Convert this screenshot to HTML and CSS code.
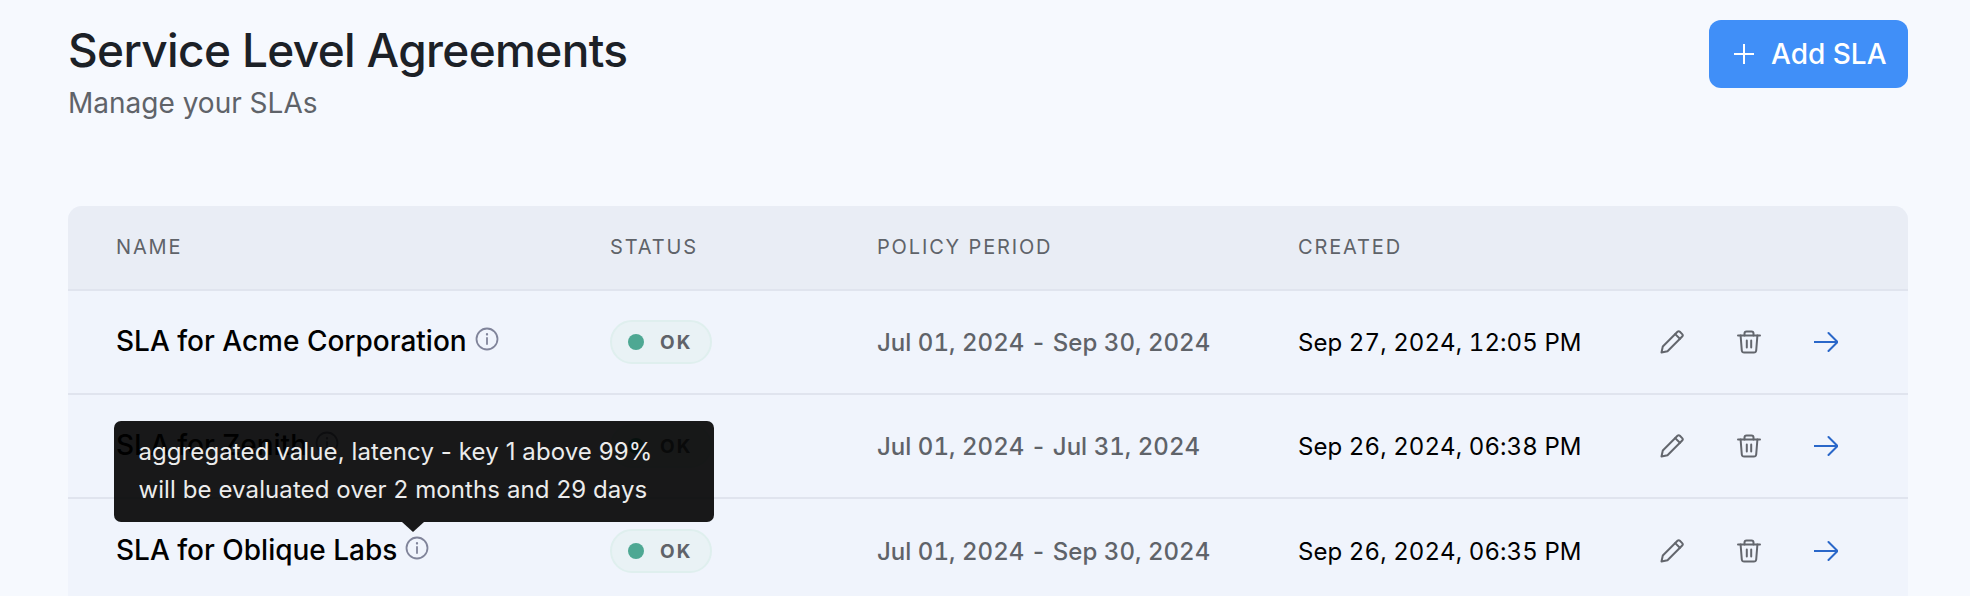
FILE: index.html
```html
<!DOCTYPE html>
<html lang="en">
<head>
<meta charset="utf-8">
<title>Service Level Agreements</title>
<link rel="stylesheet" href="styles.css">
</head>
<body>
<main class="page">
  <header class="page-head">
    <div class="titles">
      <h1 class="title">Service Level Agreements</h1>
      <p class="subtitle">Manage your SLAs</p>
    </div>
    <button class="add-btn" type="button">
      <svg class="add-icon" viewBox="0 0 22 22" aria-hidden="true"><path d="M11 1v20M1 11h20"/></svg>
      <span>Add SLA</span>
    </button>
  </header>

  <section class="table">
    <div class="row head-row">
      <div class="cell-name">NAME</div>
      <div>STATUS</div>
      <div>POLICY PERIOD</div>
      <div>CREATED</div>
      <div></div>
    </div>

    <div class="row">
      <div class="cell-name name"><span>SLA for Acme Corporation</span>
        <span class="info-wrap"><svg class="info" viewBox="0 0 24 24" aria-hidden="true"><circle cx="12" cy="12" r="10.5"/><path d="M12 11v6"/><path class="dot" d="M12 7v.6"/></svg></span>
      </div>
      <div><span class="badge"><i class="badge-dot"></i>OK</span></div>
      <div class="period">Jul 01, 2024 - Sep 30, 2024</div>
      <div class="created">Sep 27, 2024, 12:05 PM</div>
      <div class="actions">
        <svg class="act" viewBox="0 0 24 24" aria-hidden="true"><path d="M1.5 22.5l1.3-6L17.5 1.8a1.7 1.7 0 0 1 2.4 0l2.3 2.3a1.7 1.7 0 0 1 0 2.4L7.5 21.2z"/><path d="M15.2 4.1l4.7 4.7"/></svg>
        <svg class="act" viewBox="0 0 24 24" aria-hidden="true"><path d="M1 5.5h22"/><path d="M7.5 5.5V3.4A2 2 0 0 1 9.5 1.4h5a2 2 0 0 1 2 2v2.1"/><path d="M3.6 5.5l1.2 15a2.4 2.4 0 0 0 2.4 2.1h9.6a2.4 2.4 0 0 0 2.4-2.1l1.2-15"/><path d="M9.8 10.5v7M14.2 10.5v7"/></svg>
        <svg class="act arrow" viewBox="0 0 24 24" aria-hidden="true"><path d="M0 12h23"/><path d="M14.5 3L23.5 12 14.5 21"/></svg>
      </div>
    </div>

    <div class="row">
      <div class="cell-name name"><span>SLA for Zenith</span>
        <span class="info-wrap"><svg class="info" viewBox="0 0 24 24" aria-hidden="true"><circle cx="12" cy="12" r="10.5"/><path d="M12 11v6"/><path class="dot" d="M12 7v.6"/></svg></span>
      </div>
      <div><span class="badge"><i class="badge-dot"></i>OK</span></div>
      <div class="period">Jul 01, 2024 - Jul 31, 2024</div>
      <div class="created">Sep 26, 2024, 06:38 PM</div>
      <div class="actions">
        <svg class="act" viewBox="0 0 24 24" aria-hidden="true"><path d="M1.5 22.5l1.3-6L17.5 1.8a1.7 1.7 0 0 1 2.4 0l2.3 2.3a1.7 1.7 0 0 1 0 2.4L7.5 21.2z"/><path d="M15.2 4.1l4.7 4.7"/></svg>
        <svg class="act" viewBox="0 0 24 24" aria-hidden="true"><path d="M1 5.5h22"/><path d="M7.5 5.5V3.4A2 2 0 0 1 9.5 1.4h5a2 2 0 0 1 2 2v2.1"/><path d="M3.6 5.5l1.2 15a2.4 2.4 0 0 0 2.4 2.1h9.6a2.4 2.4 0 0 0 2.4-2.1l1.2-15"/><path d="M9.8 10.5v7M14.2 10.5v7"/></svg>
        <svg class="act arrow" viewBox="0 0 24 24" aria-hidden="true"><path d="M0 12h23"/><path d="M14.5 3L23.5 12 14.5 21"/></svg>
      </div>
    </div>

    <div class="row last">
      <div class="cell-name name"><span>SLA for Oblique Labs</span>
        <span class="info-wrap"><svg class="info" viewBox="0 0 24 24" aria-hidden="true"><circle cx="12" cy="12" r="10.5"/><path d="M12 11v6"/><path class="dot" d="M12 7v.6"/></svg>
          <span class="tooltip">aggregated value, latency - key 1 above 99%<br>will be evaluated over 2 months and 29 days</span>
        </span>
      </div>
      <div><span class="badge"><i class="badge-dot"></i>OK</span></div>
      <div class="period">Jul 01, 2024 - Sep 30, 2024</div>
      <div class="created">Sep 26, 2024, 06:35 PM</div>
      <div class="actions">
        <svg class="act" viewBox="0 0 24 24" aria-hidden="true"><path d="M1.5 22.5l1.3-6L17.5 1.8a1.7 1.7 0 0 1 2.4 0l2.3 2.3a1.7 1.7 0 0 1 0 2.4L7.5 21.2z"/><path d="M15.2 4.1l4.7 4.7"/></svg>
        <svg class="act" viewBox="0 0 24 24" aria-hidden="true"><path d="M1 5.5h22"/><path d="M7.5 5.5V3.4A2 2 0 0 1 9.5 1.4h5a2 2 0 0 1 2 2v2.1"/><path d="M3.6 5.5l1.2 15a2.4 2.4 0 0 0 2.4 2.1h9.6a2.4 2.4 0 0 0 2.4-2.1l1.2-15"/><path d="M9.8 10.5v7M14.2 10.5v7"/></svg>
        <svg class="act arrow" viewBox="0 0 24 24" aria-hidden="true"><path d="M0 12h23"/><path d="M14.5 3L23.5 12 14.5 21"/></svg>
      </div>
    </div>
  </section>
</main>
</body>
</html>
```
FILE: styles.css
```css
* { box-sizing: border-box; }
html, body { margin: 0; height: 100%; overflow: hidden; }
body { background: #f6f9fe; font-family: Inter, "Liberation Sans", sans-serif; color: #000; }
.page { padding: 20px 62px 0 68px; }
.page-head { display: flex; justify-content: space-between; align-items: flex-start; height: 68px; margin-bottom: 118px; }
.titles { margin-top: 4px; }
.title { margin: 0; font-size: 46px; line-height: 52px; font-weight: 500; color: #1c2127; letter-spacing: -0.65px; }
.subtitle { margin: 9px 0 0; font-size: 28px; line-height: 36px; color: #5f6369; }
.add-btn { display: flex; align-items: center; gap: 16px; width: 199px; height: 68px; padding: 0 0 0 24px; border: 0; border-radius: 12px; background: #408ff8; color: #fff; font: 450 28px Inter, sans-serif; }
.add-icon { width: 22px; height: 22px; fill: none; stroke: #fff; stroke-width: 2; }
.table { border-radius: 14px 14px 0 0; background: #f0f4fc; }
.row { display: grid; grid-template-columns: 494px 267px 421px 1fr 300px; align-items: center; height: 104px; padding-left: 48px; border-bottom: 2px solid #e0e4ee; }
.head-row { height: 85px; padding-bottom: 2px; background: #e9edf5; border-radius: 14px 14px 0 0; font-size: 20px; letter-spacing: 1.85px; color: #5f6369; }
.row.last { border-bottom: 0; }
.cell-name { display: flex; align-items: center; gap: 8px; }
.name { font-size: 28px; font-weight: 500; line-height: 34px; padding-bottom: 2px; }
.info-wrap { position: relative; display: flex; margin-top: -4px; }
.info { width: 24px; height: 24px; fill: none; stroke: #80849a; stroke-width: 1.8; stroke-linecap: round; }
.info .dot { stroke-width: 2.2; }
.tooltip { position: absolute; left: -291px; bottom: 38px; width: 600px; height: 101px; padding: 12px 24px; border-radius: 7px; background: rgba(0, 0, 0, 0.9); color: #ececec; font-size: 24px; font-weight: 400; letter-spacing: 0.1px; line-height: 38px; white-space: nowrap; z-index: 2; }
.tooltip::after { content: ""; position: absolute; left: 288px; top: 100%; border: 11px solid transparent; border-top: 10px solid rgba(0, 0, 0, 0.9); border-bottom: 0; }
.badge { display: inline-flex; align-items: center; gap: 16px; width: 102px; height: 44px; padding-left: 16px; border: 2px solid #dfefee; border-radius: 22px; background: #e9f2f5; color: #5f6369; font-size: 19px; font-weight: 700; letter-spacing: 2px; }
.badge-dot { width: 16px; height: 16px; border-radius: 50%; background: #4ea893; }
.period { font-size: 24px; font-weight: 450; font-variant-numeric: tabular-nums; letter-spacing: 0.03px; color: #5f6369; }
.created { font-size: 24px; font-weight: 400; font-variant-numeric: tabular-nums; letter-spacing: 0.08px; color: #000; }
.actions { display: flex; gap: 53px; padding-left: 52px; }
.act { width: 24px; height: 24px; fill: none; stroke: #63666d; stroke-width: 2; stroke-linejoin: round; stroke-linecap: round; }
.arrow { stroke: #2a67c9; }
```
